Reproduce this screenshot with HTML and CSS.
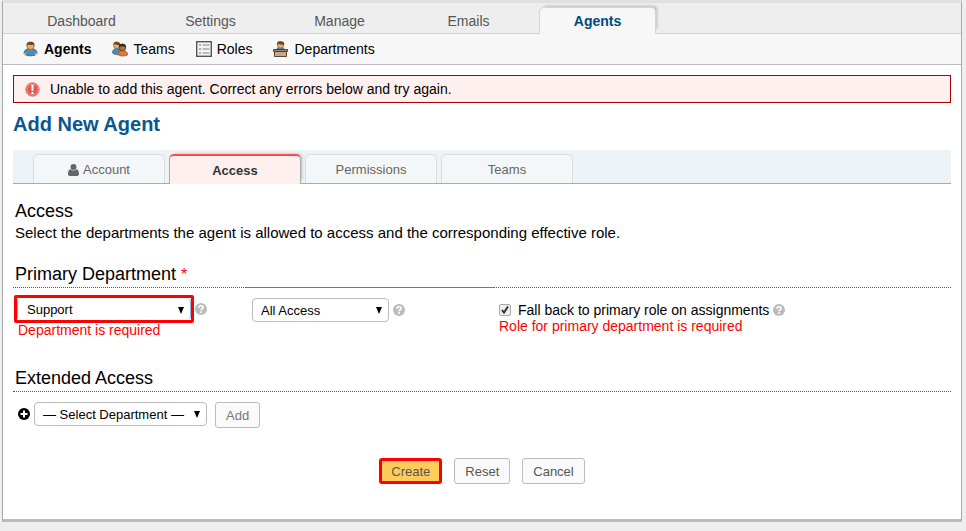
FILE: index.html
```html
<!DOCTYPE html>
<html lang="en">
<head>
<meta charset="utf-8">
<title>Add New Agent</title>
<link rel="stylesheet" href="styles.css">
</head>
<body>
<svg class="defs" aria-hidden="true">
  <symbol id="help" viewBox="0 0 12 12">
    <circle cx="6" cy="6" r="6" fill="#bbb"/>
    <path d="M4 4.7C4 2.1 8.1 2.1 8.1 4.4 8.1 5.8 6.1 5.7 6.1 7.2" fill="none" stroke="#fff" stroke-width="1.6"/>
    <rect x="5.2" y="8.2" width="1.7" height="1.7" fill="#fff"/>
  </symbol>
</svg>
<div class="container">
  <nav class="main-nav">
    <a href="#">Dashboard</a>
    <a href="#">Settings</a>
    <a href="#">Manage</a>
    <a href="#">Emails</a>
    <a href="#" class="active">Agents</a>
  </nav>
  <nav class="sub-nav">
    <a href="#" class="active">
      <svg viewBox="0 0 16 16">
        <path d="M1 12.8C1 9 3.4 8 5.5 8h4c2.1 0 4.500 1 4.500 4.800C11 15.500 4 15.500 1 12.800z" fill="#4a8fb5" stroke="#28536d" stroke-width=".8"/>
        <path d="M1 12h2v2H1zM12 12h2v2h-2z" fill="#e9ad72"/>
        <path d="M5.300 8h4.400L7.500 10z" fill="#d28a4c"/>
        <circle cx="7.500" cy="5" r="3.600" fill="#e5ae74" stroke="#78502b" stroke-width=".7"/>
        <path d="M3.700 5C3 1 6 .6 7.700.7c2.500 0 4.300 1.300 3.600 4.300L10.300 3.600C8 4.300 6 3.800 4.700 3.400z" fill="#70441f"/>
      </svg>
      Agents</a>
    <a href="#">
      <svg viewBox="0 0 16 16">
        <path d="M.6 12C.6 8.500 2.500 7.500 5 7.500s4.500 1.500 4.500 5C6 14 3 14 .6 12z" fill="#4a8fb5" stroke="#28536d" stroke-width=".7"/>
        <circle cx="4.800" cy="4.500" r="3.200" fill="#e5ae74" stroke="#78502b" stroke-width=".6"/>
        <path d="M1.500 4.500C.8.800 4 .7 5 .8c2 0 3.600 1.200 3 3.500C6 4 4 3.700 2.600 3z" fill="#70441f"/>
        <path d="M6 13.500c0-2.500 1.800-4 4.500-4s5 1.300 5 4.300c-3 1.700-7 1.700-9.500-.3z" fill="#ee7434" stroke="#9c431c" stroke-width=".7"/>
        <path d="M5.700 12.500h1.600v1.700H5.700zM14 12.500h1.600v1.700H14z" fill="#a77249"/>
        <circle cx="10.500" cy="6.500" r="3.300" fill="#aa744b" stroke="#3c281a" stroke-width=".6"/>
        <path d="M7 6.300C6.500 3 9 2.800 10.600 2.800s3.700.7 3.200 3.600C12 5 9 5 7 6.300z" fill="#38261a"/>
      </svg>
      Teams</a>
    <a href="#">
      <svg viewBox="0 0 16 16">
        <rect x=".7" y=".7" width="14.600" height="14.600" fill="#f3f3f3" stroke="#555" stroke-width="1.400"/>
        <path d="M3 4h2M3 8h2M3 12h2" stroke="#999" stroke-width="1.600"/>
        <path d="M6.500 4h7M6.500 8h7M6.500 12h7" stroke="#aaa" stroke-width="1.400"/>
      </svg>
      Roles</a>
    <a href="#">
      <svg viewBox="0 0 16 16">
        <path d="M3.500 9C3.500 7 5 6.500 7.500 6.500s4 .5 4 2.500z" fill="#4a8fb5" stroke="#28536d" stroke-width=".6"/>
        <circle cx="7.500" cy="4" r="3.200" fill="#e5ae74" stroke="#78502b" stroke-width=".6"/>
        <path d="M4 4C3.500.5 6 .2 7.700.2c2 0 4 .8 3.500 3.800C9 3.300 6.500 3.500 4.800 2.700z" fill="#70441f"/>
        <path d="M.5 8.500h14v2H.5z" fill="#a58468" stroke="#423a34" stroke-width=".9"/>
        <path d="M1.500 10.500h12v5h-12z" fill="#c5a78c" stroke="#423a34" stroke-width=".9"/>
      </svg>
      Departments</a>
  </nav>
  <main>
    <div class="error-banner" role="alert">
      <svg viewBox="0 0 16 16">
        <circle cx="8" cy="8" r="7.200" fill="#e4564c" stroke="#dc857f" stroke-width="1"/>
        <circle cx="8" cy="8" r="5.800" fill="none" stroke="#f3aaa4" stroke-width=".8"/>
        <path d="M6.800 3h2.400L8.900 9.500H7.100zM6.900 10.700h2.200v2.200H6.900z" fill="#fff"/>
      </svg>
      Unable to add this agent. Correct any errors below and try again.
    </div>
    <h1>Add New Agent</h1>
    <nav class="tabs">
      <a href="#"><svg viewBox="0 0 11 12"><circle cx="5.500" cy="3" r="3" fill="#666"/><path d="M2.500 5.300c1.800 1.600 4.200 1.600 6 0C10.300 5.500 11 7.500 11 10c0 1.300-.8 2-1.800 2H1.800C.8 12 0 11.300 0 10c0-2.500.7-4.500 2.500-4.700z" fill="#666"/></svg>Account</a>
      <a href="#" class="active">Access</a>
      <a href="#">Permissions</a>
      <a href="#">Teams</a>
    </nav>
    <form>
      <header class="intro">
        <h2>Access</h2>
        <p>Select the departments the agent is allowed to access and the corresponding effective role.</p>
      </header>
      <section class="primary">
        <h2 class="rule">Primary Department <span class="required">*</span></h2>
        <span class="rule solid"></span>
        <span class="rule"></span>
        <div class="department">
          <div class="field">
            <span class="select marked">
              <select aria-label="Primary department"><option>Support</option></select>
              <svg viewBox="0 0 6 7"><path d="M0 0h6L3 7z"/></svg>
            </span>
            <svg class="help"><use href="#help"/></svg>
          </div>
          <div class="error">Department is required</div>
        </div>
        <div class="role">
          <div class="field">
            <span class="select">
              <select aria-label="Primary role"><option>All Access</option></select>
              <svg viewBox="0 0 6 7"><path d="M0 0h6L3 7z"/></svg>
            </span>
            <svg class="help"><use href="#help"/></svg>
          </div>
        </div>
        <div class="fallback">
          <div class="check">
            <input type="checkbox" id="fallback" checked>
            <label for="fallback">Fall back to primary role on assignments</label>
            <svg class="help"><use href="#help"/></svg>
          </div>
          <div class="error">Role for primary department is required</div>
        </div>
      </section>
      <section class="extended">
        <h2 class="rule">Extended Access</h2>
        <div class="add-row">
          <svg class="plus" viewBox="0 0 12 12"><circle cx="6" cy="6" r="6"/><path d="M6 2.500v7M2.500 6h7" stroke="#fff" stroke-width="2"/></svg>
          <span class="select">
            <select aria-label="Extended department"><option>— Select Department —</option></select>
            <svg viewBox="0 0 6 7"><path d="M0 0h6L3 7z"/></svg>
          </span>
          <button type="button" class="add">Add</button>
        </div>
      </section>
      <div class="actions">
        <button type="submit" class="create">Create</button>
        <button type="reset">Reset</button>
        <button type="button">Cancel</button>
      </div>
    </form>
  </main>
</div>
</body>
</html>
```
FILE: styles.css
```css
* { box-sizing: border-box; }
body {
  margin: 0;
  background: #eee;
  color: #000;
  font: 14px/16px "Liberation Sans", Arial, sans-serif;
}
a { color: inherit; text-decoration: none; }
h1, h2, p { margin: 0; }
svg { flex: none; }
.defs { display: none; }
.container {
  margin: 0 4px 0 2px;
  background: #fff;
  border: 1px solid #aaa;
  border-top: 3px solid #e0e0e0;
  border-bottom: 3px solid #bbb;
}

.main-nav {
  display: flex;
  gap: 12px;
  height: 31px;
  padding: 4px 20px 0;
  background: #eee;
  border-bottom: 1px solid #c5d9e8;
}
.main-nav a {
  width: 117px;
  height: 27px;
  padding-top: 6px;
  color: #555;
  text-align: center;
}
.main-nav .active {
  padding-top: 5px;
  color: #004a80;
  font-weight: bold;
  background: #f7f7f7;
  border: 1px solid #c5d9e8;
  border-bottom: 0;
  border-radius: 5px 5px 0 0;
  box-shadow: 3px -3px 3px -2px #bbb;
}
.sub-nav {
  display: flex;
  gap: 21px;
  height: 31px;
  padding: 0 20px;
  align-items: center;
  background: #f7f7f7;
  border-bottom: 1px solid #bbb;
}
.sub-nav a { display: flex; gap: 5px; align-items: center; }
.sub-nav svg { width: 16px; height: 16px; }
.sub-nav .active { font-weight: bold; }

main { padding: 10px 10px 35px; }
.error-banner {
  display: flex;
  align-items: center;
  gap: 10px;
  height: 28px;
  padding: 0 11px;
  background: #fff0f0;
  border: 1px solid #a00;
}
.error-banner svg { width: 15px; height: 15px; }
h1 {
  margin: 9px 0 14px;
  color: #0a568e;
  font-size: 20px;
  line-height: 24px;
}
.tabs {
  display: flex;
  gap: 4px;
  height: 34px;
  padding: 4px 20px 0;
  background: #ecf2f6;
  border-bottom: 1px solid #aaa;
}
.tabs a {
  display: flex;
  align-items: center;
  justify-content: center;
  gap: 4px;
  width: 132px;
  height: 29px;
  padding-top: 2px;
  color: #666;
  font-size: 13px;
  background: #f4f7fa;
  border: 1px solid #ddd;
  border-bottom: 0;
  border-radius: 5px 5px 0 0;
}
.tabs svg { width: 11px; height: 12px; }
.tabs .active {
  height: 30px;
  color: #333;
  font-weight: bold;
  background: #fff0f0;
  border-color: #aaa;
  border-top: 2px solid #ff4a4a;
  box-shadow: 3px -2px 3px -2px #bbb;
}

h2 { padding-left: 2px; font-size: 18px; font-weight: normal; line-height: 20px; }
.intro { padding-top: 17px; }
.intro p { padding: 4px 2px 0; font-size: 15px; }
.rule { border-bottom: 1px dotted #555; }
.solid { border-bottom: 1px solid #777; }
.required { color: #f00; font-size: 16px; }
.error { color: #f00; }

.primary {
  display: grid;
  grid-template-columns: 233fr 248fr 457fr;
  margin-top: 23px;
}
.primary .rule { height: 24px; }
.department { padding: 7px 1px 0; }
.department .error { padding-left: 4px; }
.role { padding: 10px 6px 0; }
.fallback { padding: 14px 5px 0; }
.field { display: flex; align-items: center; gap: 4px; }
.department .field { height: 27px; gap: 1px; }
.help { width: 12px; height: 12px; }
.select { position: relative; display: inline-flex; }
.select svg {
  position: absolute;
  top: 9px;
  right: 7px;
  width: 6px;
  height: 7px;
  pointer-events: none;
}
select {
  appearance: none;
  width: 137px;
  height: 24px;
  padding: 0 8px;
  color: #000;
  font: 13px "Liberation Sans", Arial, sans-serif;
  background: #fff;
  border: 1px solid #bbb;
  border-radius: 4px;
}
.marked { border: 3px solid #f00; border-radius: 2px; }
.marked select {
  width: 174px;
  height: 22px;
  padding: 1px 9px 0;
  border-color: #fff #8fb4e8;
}
.check { display: flex; align-items: center; height: 16px; gap: 4px; }
.check input {
  appearance: none;
  width: 12px;
  height: 12px;
  margin: 0 3px 0 0;
  background: #eee url("data:image/svg+xml,%3Csvg xmlns='http://www.w3.org/2000/svg' viewBox='0 0 10 10'%3E%3Cpath d='M2 5l2 2.500L8 1.500' fill='none' stroke='%23333' stroke-width='2'/%3E%3C/svg%3E") center / 10px;
  border: 1px solid #aaa;
  border-radius: 2px;
}

.extended { margin-top: 30px; }
.extended .rule { height: 24px; }
.add-row { display: flex; align-items: flex-start; padding: 10px 5px 0; }
.plus { width: 12px; height: 12px; margin: 6px 4px 0 0; }
.add-row select { width: 173px; }
button {
  height: 26px;
  padding: 0 10px;
  color: #555;
  font: 13px "Liberation Sans", Arial, sans-serif;
  background: #fafafa;
  border: 1px solid #bbb;
  border-radius: 3px;
}
.add { margin-left: 8px; color: #777; }
.actions {
  display: flex;
  justify-content: center;
  align-items: center;
  gap: 12px;
  margin-top: 30px;
}
.create {
  padding: 0 9px;
  background: #ffcc5c;
  border: 3px solid #f00;
}
```
